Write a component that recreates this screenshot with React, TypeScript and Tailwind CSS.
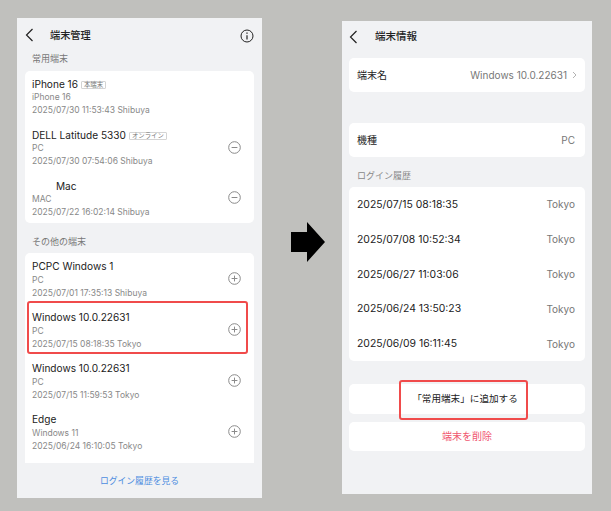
import React from "react";

const fontStack = "font-['Inter','Noto_Sans_CJK_JP',sans-serif]";

interface Device {
  name: string;
  badge?: string;
  model: string;
  lastLogin: string;
  action?: "minus" | "plus";
  indent?: boolean;
  highlighted?: boolean;
}

const regularDevices: Device[] = [
  { name: "iPhone 16", badge: "本端末", model: "iPhone 16", lastLogin: "2025/07/30 11:53:43 Shibuya" },
  { name: "DELL Latitude 5330", badge: "オンライン", model: "PC", lastLogin: "2025/07/30 07:54:06 Shibuya", action: "minus" },
  { name: "Mac", model: "MAC", lastLogin: "2025/07/22 16:02:14 Shibuya", action: "minus", indent: true },
];

const otherDevices: Device[] = [
  { name: "PCPC Windows 1", model: "PC", lastLogin: "2025/07/01 17:35:13 Shibuya", action: "plus" },
  { name: "Windows 10.0.22631", model: "PC", lastLogin: "2025/07/15 08:18:35 Tokyo", action: "plus", highlighted: true },
  { name: "Windows 10.0.22631", model: "PC", lastLogin: "2025/07/15 11:59:53 Tokyo", action: "plus" },
  { name: "Edge", model: "Windows 11", lastLogin: "2025/06/24 16:10:05 Tokyo", action: "plus" },
];

const loginHistory = [
  "2025/07/15 08:18:35",
  "2025/07/08 10:52:34",
  "2025/06/27 11:03:06",
  "2025/06/24 13:50:23",
  "2025/06/09 16:11:45",
];

function BackIcon() {
  return (
    <svg width="9" height="14" viewBox="0 0 9 14" fill="none" stroke="#222" strokeWidth="1.2">
      <path d="M7.5 1 L1.5 7 L7.5 13" />
    </svg>
  );
}

function ActionIcon({ type }: { type: "minus" | "plus" }) {
  return (
    <svg width="13" height="13" viewBox="0 0 13 13" fill="none" stroke="#8a8a8a" strokeWidth="1">
      <circle cx="6.5" cy="6.5" r="5.8" />
      <path d="M3.6 6.5 H9.4" />
      {type === "plus" && <path d="M6.5 3.6 V9.4" />}
    </svg>
  );
}

function DeviceRow({ device }: { device: Device }) {
  return (
    <div className="relative h-[51px] pl-[7px] pr-[13px] flex items-center justify-between">
      <div className="flex flex-col mt-[3px]">
        <div className="flex items-center h-[13px] gap-[3px]">
          <span className={`text-[10.1px] text-[#222] ${device.indent ? "pl-[24px]" : ""}`}>{device.name}</span>
          {device.badge && (
            <span className="border border-[#d4d4d4] rounded-[1px] text-[6.4px] leading-[6px] px-[2px] text-[#777]">
              {device.badge}
            </span>
          )}
        </div>
        <span className="text-[8.5px] leading-[13px] text-[#888]">{device.model}</span>
        <span className="text-[8.5px] leading-[13px] text-[#888]">{device.lastLogin}</span>
      </div>
      {device.action && <ActionIcon type={device.action} />}
      {device.highlighted && (
        <div className="absolute left-[2px] right-[6px] top-[-3px] bottom-[1px] border-2 border-[#f04b4b] rounded-[3px]" />
      )}
    </div>
  );
}

function DevicesPhone() {
  return (
    <div className="w-[245px] h-[480px] bg-[#f1f2f4] px-2 flex flex-col">
      <div className="h-[34px] pt-[1px] flex items-center justify-between">
        <div className="flex items-center gap-[16px]">
          <BackIcon />
          <span className="text-[10.2px] font-medium text-[#222]">端末管理</span>
        </div>
        <svg width="14" height="14" viewBox="0 0 14 14" fill="none" stroke="#222" strokeWidth="1">
          <circle cx="7" cy="7" r="6" />
          <path d="M7 6.2 V10.4" strokeWidth="1.2" />
          <path d="M7 3.6 V4.8" strokeWidth="1.3" />
        </svg>
      </div>
      <div className="h-[19px] pl-[7px] pb-[5px] flex items-center text-[9px] text-[#777]">常用端末</div>
      <div className="bg-white rounded-[5px] h-[152px] flex flex-col">
        {regularDevices.map((d, i) => (
          <DeviceRow key={i} device={d} />
        ))}
      </div>
      <div className="h-[30px] pl-[7px] pt-[7px] flex items-center text-[9px] text-[#777]">その他の端末</div>
      <div className="bg-white rounded-t-[5px] h-[210px] flex flex-col">
        {otherDevices.map((d, i) => (
          <DeviceRow key={i} device={d} />
        ))}
      </div>
      <div className="flex-1 flex items-center justify-center text-[8.8px] text-[#4d8de0]">ログイン履歴を見る</div>
    </div>
  );
}

function InfoPhone() {
  return (
    <div className="w-[250px] h-[473px] bg-[#f1f2f4] px-[7px] flex flex-col">
      <div className="h-[31px] flex items-center gap-[17px]">
        <BackIcon />
        <span className="text-[10.5px] font-medium text-[#222]">端末情報</span>
      </div>
      <div className="bg-white rounded-[5px] h-[34px] mt-[6px] px-2 flex items-center justify-between">
        <span className="text-[10px] text-[#222]">端末名</span>
        <span className="flex items-center gap-[5px] text-[10px] text-[#777]">
          Windows 10.0.22631
          <svg width="5" height="8" viewBox="0 0 5 8" fill="none" stroke="#aaa" strokeWidth="0.9">
            <path d="M1 1 L4 4 L1 7" />
          </svg>
        </span>
      </div>
      <div className="bg-white rounded-[5px] h-[34px] mt-[31px] px-2 flex items-center justify-between">
        <span className="text-[10px] text-[#222]">機種</span>
        <span className="text-[10px] text-[#777] pr-[2px]">PC</span>
      </div>
      <div className="h-[30px] px-2 pt-[8px] flex items-center text-[9px] text-[#888]">ログイン履歴</div>
      <div className="bg-white rounded-[5px] h-[174px] flex flex-col">
        {loginHistory.map((t, i) => (
          <div key={i} className="h-[34.8px] px-2 pr-[10px] flex items-center justify-between">
            <span className="text-[10.4px] text-[#222] mt-[1px]">{t}</span>
            <span className="text-[10px] text-[#777] mt-[1px]">Tokyo</span>
          </div>
        ))}
      </div>
      <div className="relative bg-white rounded-[5px] h-[30px] mt-[23px] pr-[4px] flex items-center justify-center text-[9.6px] text-[#222]">
        「常用端末」に追加する
        <div className="absolute left-[50px] top-[-4px] w-[129px] h-[40px] border-2 border-[#f04b4b] rounded-[3px]" />
      </div>
      <div className="bg-white rounded-[5px] h-[29px] mt-2 flex items-center justify-center text-[10px] text-[#f0566f]">
        端末を削除
      </div>
    </div>
  );
}

export default function App() {
  return (
    <div className={`w-[611px] h-[511px] bg-[#c0c0bd] flex items-start pl-[17px] pt-[18px] ${fontStack}`}>
      <DevicesPhone />
      <div className="w-[80px] pt-[204px] pl-[29px]">
        <svg width="34" height="40" viewBox="0 0 34 40">
          <path d="M0 10 H16 V0 L34 20 L16 40 V30 H0 Z" fill="#000" />
        </svg>
      </div>
      <div className="pt-[3px]">
        <InfoPhone />
      </div>
    </div>
  );
}
